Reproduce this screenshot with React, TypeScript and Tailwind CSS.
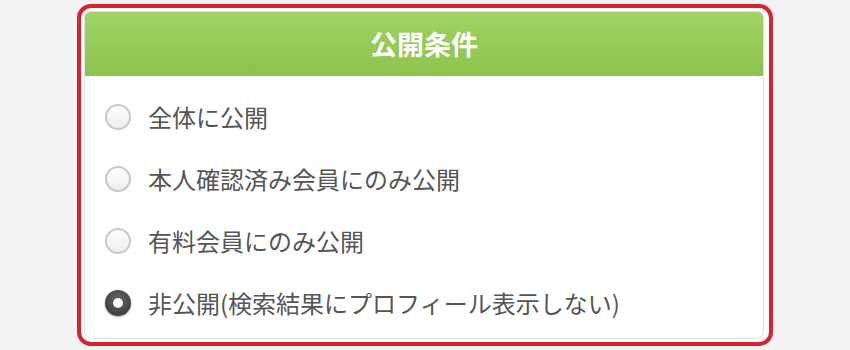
import React from "react";

const options = [
  "全体に公開",
  "本人確認済み会員にのみ公開",
  "有料会員にのみ公開",
  "非公開(検索結果にプロフィール表示しない)",
];

function Radio({ checked }: { checked: boolean }) {
  if (checked) {
    return (
      <span className="flex h-[26px] w-[26px] shrink-0 items-center justify-center rounded-full bg-[radial-gradient(circle_at_50%_40%,#6a6a6a,#2e2e2e)] shadow-[0_1px_2px_rgba(0,0,0,0.35)]">
        <span className="h-[10px] w-[10px] rounded-full bg-white shadow-[0_0_2px_rgba(0,0,0,0.4)]" />
      </span>
    );
  }
  return (
    <span className="h-[26px] w-[26px] shrink-0 rounded-full border-2 border-[#c8c8c8] bg-gradient-to-b from-white to-[#ededed]" />
  );
}

export default function App() {
  const selected = 3;

  return (
    <div
      className="flex h-[350px] w-[850px] justify-center bg-[#f3f3f3] pt-[4px]"
      style={{ fontFamily: '"Noto Sans CJK JP", "Noto Sans", sans-serif' }}
    >
      <div className="h-[342px] w-[696px] rounded-[14px] border-4 border-[#d52430] bg-white p-[3px] pr-[5px]">
        <div className="h-full overflow-hidden rounded-t-[6px] rounded-b-[8px] border border-[#e2e2e2] bg-white">
          {/* header */}
          <div className="flex h-[64px] items-center justify-center bg-gradient-to-b from-[#a2d266] to-[#8cc34b]">
            <span className="text-[27px] font-bold text-white">公開条件</span>
          </div>

          <div className="pt-[10px]">
            {options.map((label, i) => (
              <label
                key={label}
                className="flex h-[62px] items-center gap-[17px] pl-[20px] text-[24px] text-[#555555]"
              >
                <Radio checked={i === selected} />
                <span>{label}</span>
              </label>
            ))}
          </div>
        </div>
      </div>
    </div>
  );
}
